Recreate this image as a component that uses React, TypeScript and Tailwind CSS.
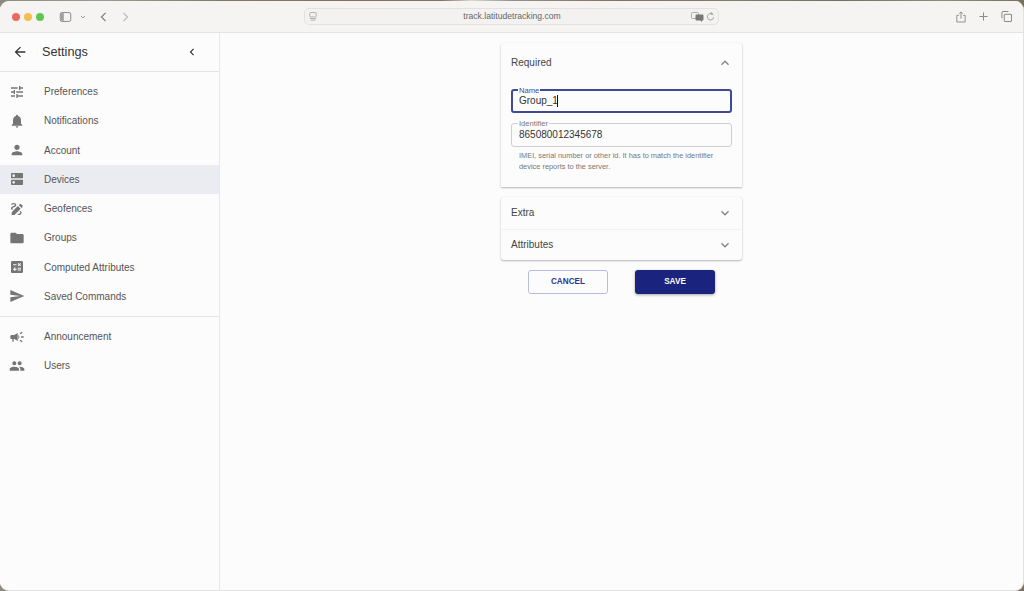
import React from 'react'

const paths = {
  tune: 'M3 17v2h6v-2H3zM3 5v2h10V5H3zm10 16v-2h8v-2h-8v-2h-2v6h2zM7 9v2H3v2h4v2h2V9H7zm14 4v-2H11v2h10zm-6-4h2V7h4V5h-4V3h-2v6z',
  bell: 'M12 22c1.1 0 2-.9 2-2h-4c0 1.1.89 2 2 2zm6-6v-5c0-3.07-1.64-5.64-4.5-6.32V4c0-.83-.67-1.5-1.5-1.5s-1.5.67-1.5 1.5v.68C7.63 5.36 6 7.92 6 11v5l-2 2v1h16v-1l-2-2z',
  person: 'M12 12c2.21 0 4-1.79 4-4s-1.79-4-4-4-4 1.79-4 4 1.79 4 4 4zm0 2c-2.67 0-8 1.34-8 4v2h16v-2c0-2.66-5.33-4-8-4z',
  dns: 'M20 13H4c-.55 0-1 .45-1 1v6c0 .55.45 1 1 1h16c.55 0 1-.45 1-1v-6c0-.55-.45-1-1-1zM7 19c-1.1 0-2-.9-2-2s.9-2 2-2 2 .9 2 2-.9 2-2 2zM20 3H4c-.55 0-1 .45-1 1v6c0 .55.45 1 1 1h16c.55 0 1-.45 1-1V4c0-.55-.45-1-1-1zM7 9c-1.1 0-2-.9-2-2s.9-2 2-2 2 .9 2 2-.9 2-2 2z',
  draw: 'M18.85 10.39l1.06-1.06c.78-.78.78-2.05 0-2.83L18.5 5.09c-.78-.78-2.05-.78-2.83 0l-1.06 1.06 4.24 4.24zm-5.66-2.83L4 16.76V21h4.24l9.19-9.19-4.24-4.25zM19 17.5c0 2.19-2.54 3.5-5 3.5-.55 0-1-.45-1-1s.45-1 1-1c1.54 0 3-.73 3-1.5 0-.47-.48-.87-1.23-1.2l1.48-1.48c1.07.63 1.75 1.47 1.75 2.68zM4.58 13.35C3.61 12.79 3 12.06 3 11c0-1.8 1.89-2.63 3.56-3.36C7.59 7.18 9 6.56 9 6c0-.41-.78-1-2-1-1.26 0-1.8.61-1.83.64-.35.41-.98.46-1.4.12-.41-.34-.49-.95-.15-1.38C3.73 4.24 4.76 3 7 3s4 1.32 4 3c0 1.87-1.93 2.72-3.64 3.47C6.42 9.88 5 10.5 5 11c0 .31.43.6 1.07.86l-1.49 1.49z',
  folder: 'M10 4H4c-1.1 0-1.99.9-1.99 2L2 18c0 1.1.9 2 2 2h16c1.1 0 2-.9 2-2V8c0-1.1-.9-2-2-2h-8l-2-2z',
  calculate: 'M19 3H5c-1.1 0-2 .9-2 2v14c0 1.1.9 2 2 2h14c1.1 0 2-.9 2-2V5c0-1.1-.9-2-2-2zm-5.97 4.06L14.09 6l1.41 1.41L16.91 6l1.06 1.06-1.41 1.41 1.41 1.41-1.06 1.06-1.41-1.4-1.41 1.41-1.06-1.06 1.41-1.41-1.41-1.42zm-6.78.66h5v1.5h-5v-1.5zM11.5 16h-2v2H8v-2H6v-1.5h2v-2h1.5v2h2V16zm6.5 1.25h-5v-1.5h5v1.5zm0-2.5h-5v-1.5h5v1.5z',
  send: 'M2.01 21 23 12 2.01 3 2 10l15 2-15 2z',
  campaign: 'M18 11v2h4v-2h-4zm-2 6.61c.96.71 2.21 1.65 3.2 2.39.4-.53.8-1.07 1.2-1.6-.99-.74-2.24-1.68-3.2-2.4-.4.54-.8 1.08-1.2 1.61zM20.4 5.6c-.4-.53-.8-1.07-1.2-1.6-.99.74-2.24 1.68-3.2 2.4.4.53.8 1.07 1.2 1.6.96-.72 2.21-1.65 3.2-2.4zM4 9c-1.1 0-2 .9-2 2v2c0 1.1.9 2 2 2h1v4h2v-4h1l5 3V6L8 9H4zm11.5 3c0-1.33-.58-2.53-1.5-3.35v6.69c.92-.81 1.5-2.01 1.5-3.34z',
  people: 'M16 11c1.66 0 2.99-1.34 2.99-3S17.66 5 16 5c-1.66 0-3 1.34-3 3s1.34 3 3 3zm-8 0c1.66 0 2.99-1.34 2.99-3S9.66 5 8 5C6.34 5 5 6.34 5 8s1.34 3 3 3zm0 2c-2.33 0-7 1.17-7 3.5V19h14v-2.5c0-2.33-4.67-3.5-7-3.5zm8 0c-.29 0-.62.02-.97.05 1.16.84 1.97 1.97 1.97 3.45V19h6v-2.5c0-2.33-4.67-3.5-7-3.5z',
  back: 'M20 11H7.83l5.59-5.59L12 4l-8 8 8 8 1.41-1.41L7.83 13H20v-2z',
  left: 'M15.41 7.41 14 6l-6 6 6 6 1.41-1.41L10.83 12z',
  more: 'M16.59 8.59 12 13.17 7.41 8.59 6 10l6 6 6-6z',
  less: 'M12 8l-6 6 1.41 1.41L12 10.83l4.59 4.58L18 14z',
}

type IconName = keyof typeof paths

function Icon({ name, className }: { name: IconName; className: string }) {
  return (
    <svg viewBox="0 0 24 24" className={className} fill="currentColor">
      <path d={paths[name]} />
    </svg>
  )
}

const topItems: { icon: IconName; label: string; active?: boolean }[] = [
  { icon: 'tune', label: 'Preferences' },
  { icon: 'bell', label: 'Notifications' },
  { icon: 'person', label: 'Account' },
  { icon: 'dns', label: 'Devices', active: true },
  { icon: 'draw', label: 'Geofences' },
  { icon: 'folder', label: 'Groups' },
  { icon: 'calculate', label: 'Computed Attributes' },
  { icon: 'send', label: 'Saved Commands' },
]

const bottomItems: { icon: IconName; label: string }[] = [
  { icon: 'campaign', label: 'Announcement' },
  { icon: 'people', label: 'Users' },
]

function NavItem({ icon, label, active }: { icon: IconName; label: string; active?: boolean }) {
  return (
    <div className={`flex h-[29.25px] items-center pl-[9px] ${active ? 'bg-[#ebecf2]' : ''}`}>
      <Icon name={icon} className="h-[16px] w-[16px] text-[#757575]" />
      <span className="ml-[19px] text-[10px] text-[#555555]">{label}</span>
    </div>
  )
}

function Toolbar() {
  return (
    <div className="flex h-[32px] items-center border-b border-[#e4e3e1] bg-[#f5f4f2]">
      <div className="flex w-[304px] items-center pl-[12px]">
        <span className="h-[8px] w-[8px] rounded-full bg-[#ec6a5e]" />
        <span className="ml-[4px] h-[8px] w-[8px] rounded-full bg-[#f4bf4f]" />
        <span className="ml-[4px] h-[8px] w-[8px] rounded-full bg-[#61c554]" />
        <svg viewBox="0 0 14 12" className="ml-[15px] h-[10px] w-[13px]" fill="none" stroke="#8a8a8a" strokeWidth="1.2">
          <rect x="0.7" y="0.7" width="12.6" height="10.6" rx="2" />
          <rect x="1.5" y="1.5" width="3.5" height="9" fill="#a0a0a0" stroke="none" />
        </svg>
        <svg viewBox="0 0 8 6" className="ml-[8px] h-[4px] w-[6px]" fill="none" stroke="#8a8a8a" strokeWidth="1.3">
          <path d="M1 1.5 4 4.5 7 1.5" />
        </svg>
        <svg viewBox="0 0 8 12" className="ml-[14px] h-[10px] w-[7px]" fill="none" stroke="#777777" strokeWidth="1.3">
          <path d="M6.5 1 1.5 6 6.5 11" />
        </svg>
        <svg viewBox="0 0 8 12" className="ml-[15px] h-[10px] w-[7px]" fill="none" stroke="#b5b5b5" strokeWidth="1.3">
          <path d="M1.5 1 6.5 6 1.5 11" />
        </svg>
      </div>
      <div className="flex h-[17px] w-[415px] items-center rounded-[5px] border border-[#e3e2e0] bg-[#f3f2f0] pl-[4px] pr-[3px]">
        <svg viewBox="0 0 10 11" className="h-[9px] w-[8px]" fill="none" stroke="#9a9a9a" strokeWidth="0.9">
          <rect x="1" y="0.5" width="8" height="5.5" rx="1" />
          <path d="M1 8h8M2 10h6" />
        </svg>
        <span className="flex-1 pl-[16px] text-center text-[8.6px] text-[#666666]">track.latitudetracking.com</span>
        <svg viewBox="0 0 13 10" className="h-[10px] w-[13px]">
          <rect x="0.5" y="0.5" width="7" height="6" rx="1" fill="none" stroke="#9a9a9a" strokeWidth="0.8" />
          <path d="M5.5 2.5h6a1 1 0 0 1 1 1v4a1 1 0 0 1-1 1H11v1.5L9.5 8.5h-4a1 1 0 0 1-1-1v-4a1 1 0 0 1 1-1z" fill="#777777" />
        </svg>
        <svg viewBox="0 0 12 12" className="ml-[2px] h-[9px] w-[9px]" fill="none" stroke="#8a8a8a" strokeWidth="1">
          <path d="M9.8 4.2A4.3 4.3 0 1 0 10.3 7M6.5 0.5 8.5 2 6.5 3.5" />
        </svg>
      </div>
      <div className="ml-auto flex items-center pr-[11px]">
        <svg viewBox="0 0 12 14" className="h-[12px] w-[10px]" fill="none" stroke="#8a8a8a" strokeWidth="1.1">
          <path d="M3.5 5H1v8h10V5H8.5M6 9V1M3.8 3 6 1l2.2 2" />
        </svg>
        <svg viewBox="0 0 10 10" className="ml-[13px] h-[9px] w-[9px]" fill="none" stroke="#8a8a8a" strokeWidth="1.1">
          <path d="M5 0.5v9M0.5 5h9" />
        </svg>
        <svg viewBox="0 0 12 12" className="ml-[13px] h-[11px] w-[11px]" fill="none" stroke="#8a8a8a" strokeWidth="1.1">
          <rect x="3.5" y="3.5" width="8" height="8" rx="1.5" />
          <path d="M1 8V2a1.4 1.4 0 0 1 1.4-1.4H8" />
        </svg>
      </div>
    </div>
  )
}

function Sidebar() {
  return (
    <aside className="w-[220px] shrink-0 border-r border-[#e8e8e8] bg-[#fcfcfc]">
      <div className="flex h-[39px] items-center border-b border-[#e4e4e4] pl-[12px] pr-[20px]">
        <Icon name="back" className="h-[16px] w-[16px] text-[#333333]" />
        <span className="ml-[14px] flex-1 pt-px text-[12.7px] text-[#333333]">Settings</span>
        <Icon name="left" className="h-[14px] w-[14px] text-[#333333]" />
      </div>
      <div className="mt-[5px]">
        {topItems.map((item) => (
          <NavItem key={item.label} {...item} />
        ))}
      </div>
      <div className="mt-[5px] border-t border-[#e4e4e4] pt-[5px]">
        {bottomItems.map((item) => (
          <NavItem key={item.label} {...item} />
        ))}
      </div>
    </aside>
  )
}

function Field({ label, value, focused }: { label: string; value: string; focused?: boolean }) {
  return (
    <div
      className={`relative flex h-[24px] items-center rounded-[3px] pb-px text-[10px] text-[#333333] ${
        focused ? 'border-2 border-[#3f4899] px-[6px]' : 'border border-[#cfcfcf] px-[7px]'
      }`}
    >
      <span
        className={`absolute top-[-5px] bg-[#fcfcfc] px-px text-[7.6px] leading-[9px] ${
          focused ? 'left-[5px] text-[#3f4899]' : 'left-[6px] text-[#777777]'
        }`}
      >
        {label}
      </span>
      <span>{value}</span>
      {focused && <span className="ml-[-1px] h-[12px] w-px bg-[#111111]" />}
    </div>
  )
}

function AccordionHeader({ title, icon, height }: { title: string; icon: IconName; height: string }) {
  return (
    <div className={`flex items-center justify-between pl-[10px] pr-[9px] ${height}`}>
      <span className="pb-px text-[10px] text-[#444444]">{title}</span>
      <Icon name={icon} className="h-[16px] w-[16px] text-[#858585]" />
    </div>
  )
}

function DeviceForm() {
  return (
    <div className="flex w-[241px] flex-col pt-[10px]">
      <section className="h-[144px] rounded-t-[3px] bg-[#fcfcfc] shadow-[0_1px_2px_rgba(0,0,0,0.28),0_0_2px_rgba(0,0,0,0.06)]">
        <AccordionHeader title="Required" icon="less" height="h-[40px]" />
        <div className="flex flex-col gap-[10px] px-[10px] pt-[6px]">
          <Field label="Name" value="Group_1" focused />
          <div>
            <Field label="Identifier" value="865080012345678" />
            <p className="mt-[3px] px-[8px] text-[7.4px] leading-[11px] text-[#777777]">
              IMEI, serial number or other id. It has to match the identifier device reports to the server.
            </p>
          </div>
        </div>
      </section>
      <section className="mt-[10px] rounded-[3px] bg-[#fcfcfc] shadow-[0_1px_2px_rgba(0,0,0,0.28),0_0_2px_rgba(0,0,0,0.06)]">
        <AccordionHeader title="Extra" icon="more" height="h-[32px]" />
        <div className="border-t border-[#f2f2f2]">
          <AccordionHeader title="Attributes" icon="more" height="h-[30px]" />
        </div>
      </section>
      <div className="mt-[10px] flex justify-center gap-[27px]">
        <button className="flex h-[24px] w-[80px] items-center justify-center rounded-[3px] border border-[#b9bce0] text-[8.2px] font-bold text-[#2b3590]">
          CANCEL
        </button>
        <button className="flex h-[24px] w-[80px] items-center justify-center rounded-[3px] bg-[#1a237e] text-[8.2px] font-bold text-white shadow-[0_1px_3px_rgba(0,0,0,0.35)]">
          SAVE
        </button>
      </div>
    </div>
  )
}

export default function App() {
  return (
    <div className="h-[591px] w-[1024px] overflow-hidden bg-[linear-gradient(90deg,#8d8a80,#9a9d96_10%,#7d7a66_22%,#85705f_34%,#7e6f62_43%,#dcdad2_46%,#8f9290_50%,#8b6f5c_60%,#7d8068_72%,#6f7068_82%,#8c8f76_92%,#77725f)] pt-px font-['Liberation_Sans',Arial,sans-serif]">
      <div className="flex h-[590px] flex-col overflow-hidden rounded-[9px] border-r border-b border-[#e2e2e2] bg-[#fcfcfc]">
        <Toolbar />
        <div className="flex flex-1">
          <Sidebar />
          <main className="flex flex-1 justify-center bg-[#fcfcfc]">
            <DeviceForm />
          </main>
        </div>
      </div>
    </div>
  )
}
